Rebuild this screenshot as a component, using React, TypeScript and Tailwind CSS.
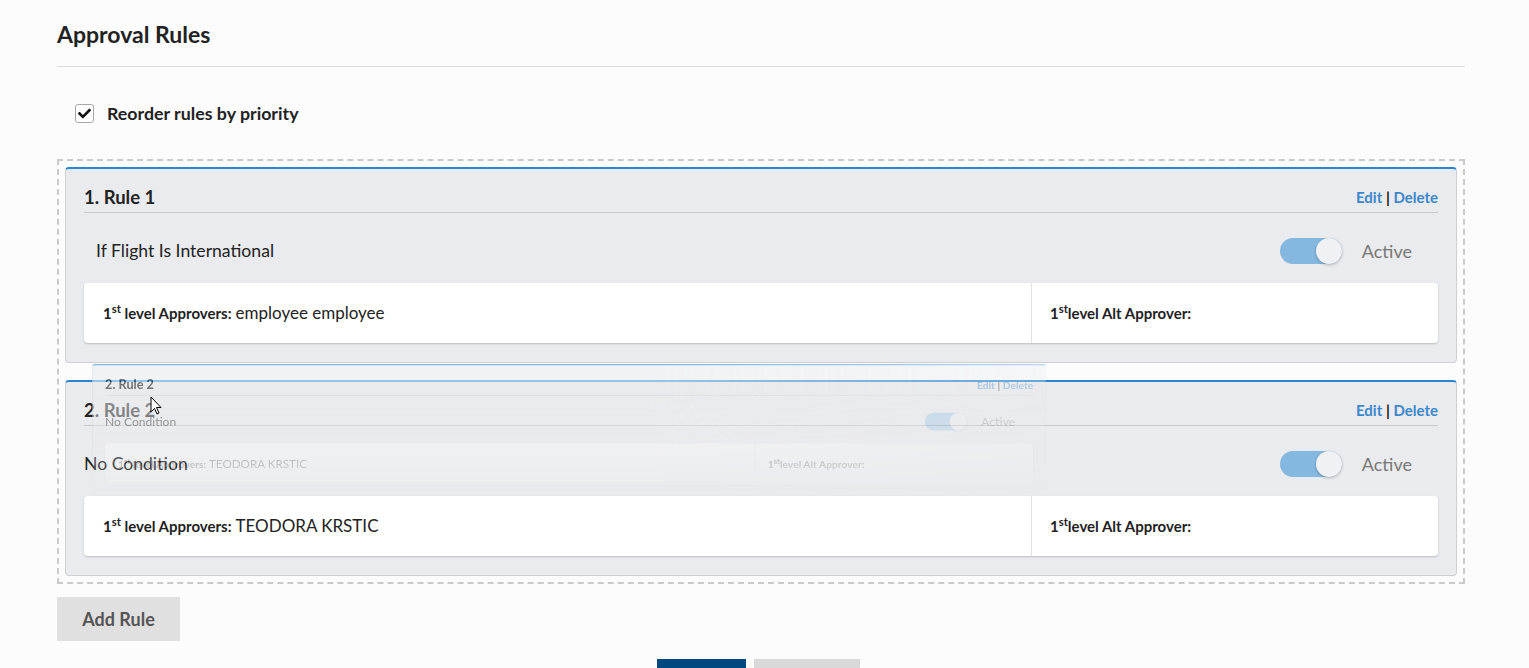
import { FaCheck } from "react-icons/fa";

type Rule = {
  n: number;
  name: string;
  condition: string;
  indent: boolean;
  approver: string;
};

const RULES: Rule[] = [
  { n: 1, name: "Rule 1", condition: "If Flight Is International", indent: true, approver: "employee employee" },
  { n: 2, name: "Rule 2", condition: "No Condition", indent: false, approver: "TEODORA KRSTIC" },
];

function Toggle() {
  return (
    <div className="relative h-[26px] w-[62px] rounded-full bg-[#85b8e0]">
      <div className="absolute right-0 top-0 h-[26px] w-[26px] rounded-full bg-[#f0f1f4] shadow-[0_1px_3px_rgba(0,0,0,0.25)]" />
    </div>
  );
}

function RuleCard({ rule }: { rule: Rule }) {
  return (
    <div className="rounded-[4px] border border-[#cfd0d3] border-t-2 border-t-[#2a86d1] bg-[#eaebee] px-[18px] pb-[19px]">
      <div className="flex items-center justify-between border-b border-[#c9cacd] pb-[3px] pt-[16px] leading-[24px]">
        <span className="text-[18.5px] font-bold text-[#222]">
          {rule.n}. {rule.name}
        </span>
        <span className="text-[15px] font-bold text-[#3a87cc]">
          Edit <span className="text-[#111]">|</span> Delete
        </span>
      </div>

      <div className={`flex items-center justify-between pb-[19px] pt-[25px] ${rule.indent ? "pl-[12px]" : ""}`}>
        <span className="text-[17.6px] leading-[26px] text-[#222]">{rule.condition}</span>
        <div className="mr-[26px] flex items-center gap-[20px]">
          <Toggle />
          <span className="text-[18px] leading-[26px] text-[#777]">Active</span>
        </div>
      </div>

      <div className="flex h-[60px] rounded-[4px] bg-white shadow-[0_1px_2px_rgba(0,0,0,0.2)]">
        <div className="flex w-[948px] items-center border-r border-[#e2e2e2] pl-[19px]">
          <span className="text-[15px] font-bold text-[#222]">
            1<sup>st</sup> level Approvers:
          </span>
          <span className="ml-[4px] text-[17px] text-[#222]">{rule.approver}</span>
        </div>
        <div className="flex flex-1 items-center pl-[18px]">
          <span className="text-[15px] font-bold text-[#222]">
            1<sup>st</sup>level Alt Approver:
          </span>
        </div>
      </div>
    </div>
  );
}

export default function App() {
  return (
    <div className="relative h-[668px] overflow-hidden bg-[#fcfcfc] font-['Lato','Noto_Sans',sans-serif]">
      <div className="ml-[57px] w-[1408px]">
        <div className="border-b border-[#dcdcdc] pb-[19px] pt-[21px]">
          <h1 className="text-[23px] font-bold leading-[26px] text-[#222]">Approval Rules</h1>
        </div>

        <label className="mt-[35px] flex items-center gap-[13px] pl-[18px]">
          <span className="flex h-[19px] w-[19px] items-center justify-center rounded-[3px] border border-[#a8a8a8] bg-white">
            <FaCheck className="h-[13px] w-[13px] text-[#111]" />
          </span>
          <span className="text-[17.8px] font-bold leading-[22px] text-[#222]">Reorder rules by priority</span>
        </label>

        <div className="mt-[35px] flex flex-col gap-[17px] border-2 border-dashed border-[#cacaca] p-[6px]">
          {RULES.map((r) => (
            <RuleCard key={r.n} rule={r} />
          ))}
        </div>

        <button className="mt-[13px] h-[44px] w-[123px] bg-[#e0e0e0] text-[18px] font-bold text-[#555]">
          Add Rule
        </button>

        <div className="mt-[18px] flex justify-center gap-[8px] pr-[6px]">
          <button className="h-[40px] w-[89px] bg-[#00487f]" />
          <button className="h-[40px] w-[106px] bg-[#d9d9d9]" />
        </div>
      </div>

      {/* drag ghost of rule 2 */}
      <div className="pointer-events-none absolute left-[92px] top-[364px] [mask-image:linear-gradient(to_right,black_40%,rgba(0,0,0,0.35)_80%,transparent_100%)]">
        <div className="w-[1391px] origin-top-left scale-[0.686] opacity-60 [mask-image:linear-gradient(to_bottom,black_20%,rgba(0,0,0,0.4)_70%,transparent_100%)]">
          <RuleCard rule={RULES[1]} />
        </div>
      </div>

      {/* cursor */}
      <svg className="pointer-events-none absolute left-[150px] top-[396px]" width="14" height="22" viewBox="0 0 14 22">
        <path d="M1 1 L1 16 L4.5 12.5 L7 18 L9 17 L6.5 11.5 L11 11.5 Z" fill="white" stroke="black" strokeWidth="1" />
      </svg>
    </div>
  );
}
